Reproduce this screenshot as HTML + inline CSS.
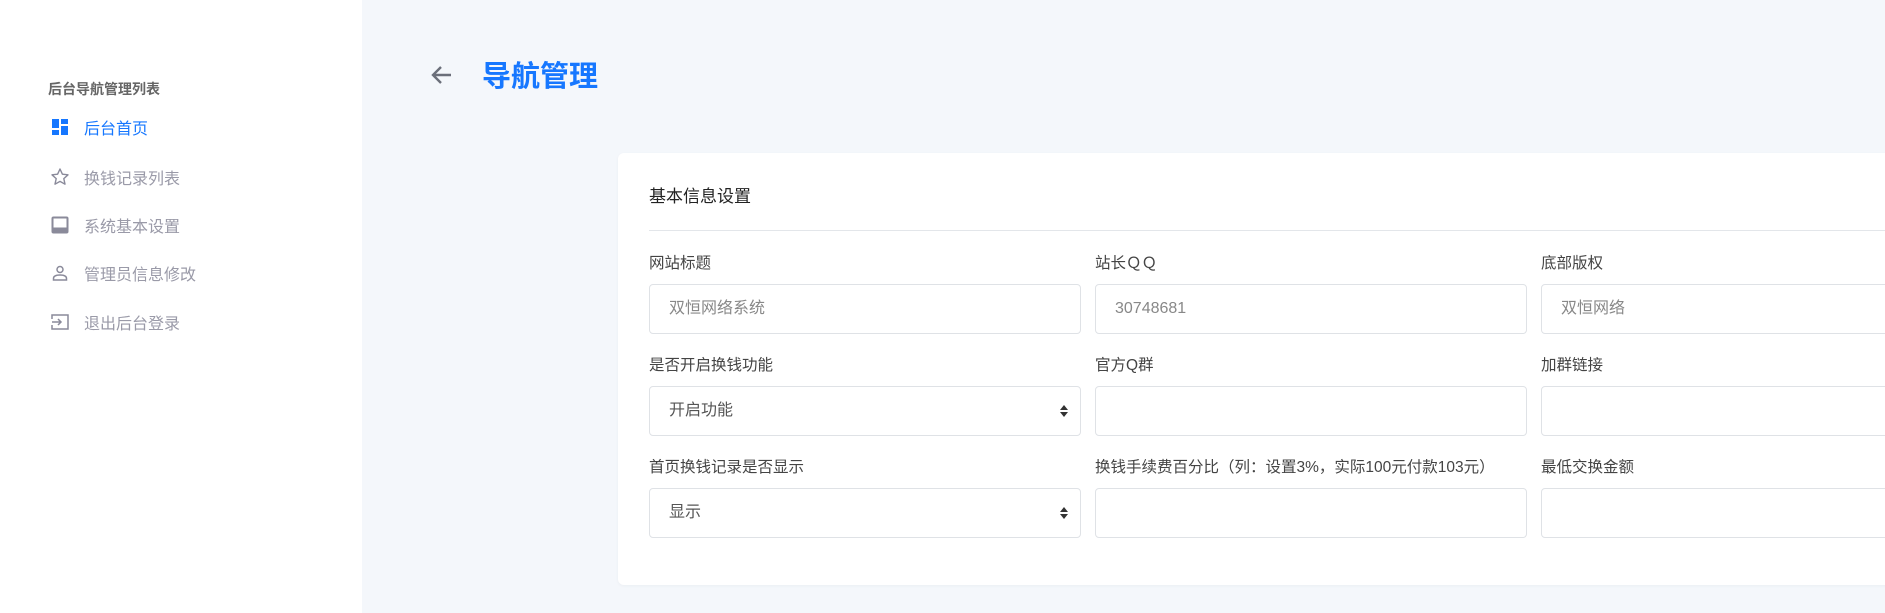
<!DOCTYPE html>
<html><head><meta charset="utf-8"><style>
*{margin:0;padding:0;box-sizing:border-box}
body{width:1885px;height:613px;overflow:hidden;background:#f4f7fb;font-family:"Liberation Sans","Noto Sans CJK SC",sans-serif;position:relative}
.side{position:absolute;left:0;top:0;width:362px;height:613px;background:#fff}
.st{position:absolute;left:48px;top:79px;font-size:14px;font-weight:bold;color:#666}
.mi{position:absolute;left:50px;font-size:16px;color:#9a9aa8;display:flex;align-items:center}
.mi svg{width:20px;height:20px;margin-right:14px}
.mi.a{color:#1677ff}
.back{position:absolute;left:430px;top:62px}
.title{position:absolute;left:482px;top:53px;font-size:29px;font-weight:bold;color:#1677ff}
.card{position:absolute;left:618px;top:153px;width:1400px;height:432px;background:#fff;border-radius:6px;box-shadow:0 1px 3px rgba(0,0,0,.04)}
.ct{position:absolute;left:649px;top:182px;font-size:17px;color:#222}
.hr{position:absolute;left:649px;top:230px;width:1300px;height:1px;background:#e3e6ea}
.lb{position:absolute;font-size:15.5px;color:#444}
.in{position:absolute;width:432px;height:50px;border:1px solid #dfe2e6;border-radius:4px;background:#fff;font-size:16px;color:#888;padding-left:19px;line-height:48px}
.car{position:absolute;right:12px;top:17px;width:8px;height:14px}
</style></head><body>
<div class="side">
<div class="st">后台导航管理列表</div>
<div class="mi a" style="top:115px"><svg viewBox="0 0 20 20"><rect x="2" y="2" width="7" height="9" fill="#1677ff"/><rect x="11" y="2" width="7" height="5" fill="#1677ff"/><rect x="2" y="13" width="7" height="5" fill="#1677ff"/><rect x="11" y="9" width="7" height="9" fill="#1677ff"/></svg>后台首页</div>
<div class="mi" style="top:165px"><svg viewBox="0 0 20 20"><path d="M10 2l2.4 5.2 5.6.6-4.2 3.8 1.2 5.6L10 14.4 5 17.2l1.2-5.6L2 7.8l5.6-.6z" fill="none" stroke="#8a8a9a" stroke-width="1.4" stroke-linejoin="round"/></svg>换钱记录列表</div>
<div class="mi" style="top:213px"><svg viewBox="0 0 20 20"><rect x="1.5" y="1.5" width="17" height="17" rx="2" fill="#8a8a9a"/><rect x="3.5" y="3.5" width="13" height="9" fill="#fff"/></svg>系统基本设置</div>
<div class="mi" style="top:261px"><svg viewBox="0 0 20 20"><circle cx="10" cy="6.5" r="3" fill="none" stroke="#8a8a9a" stroke-width="1.5"/><path d="M3.5 17v-1.5c0-2 2-3.5 6.5-3.5s6.5 1.5 6.5 3.5V17z" fill="none" stroke="#8a8a9a" stroke-width="1.5"/></svg>管理员信息修改</div>
<div class="mi" style="top:310px"><svg viewBox="0 0 20 20"><path d="M2 7V3h16v14H2v-4" fill="none" stroke="#8a8a9a" stroke-width="1.5"/><path d="M2 10h9M8 7l3 3-3 3" fill="none" stroke="#8a8a9a" stroke-width="1.5"/></svg>退出后台登录</div>
</div>
<svg class="back" width="24" height="26" viewBox="0 0 24 26"><path d="M21 13H4M11 5l-8 8 8 8" fill="none" stroke="#6b6f7a" stroke-width="2.4"/></svg>
<div class="title">导航管理</div>
<div class="card"></div>
<div class="ct">基本信息设置</div>
<div class="hr"></div>

<div class="lb" style="left:649px;top:251px">网站标题</div>
<div class="lb" style="left:1095px;top:251px">站长ＱＱ</div>
<div class="lb" style="left:1541px;top:251px">底部版权</div>
<div class="in" style="left:649px;top:284px">双恒网络系统</div>
<div class="in" style="left:1095px;top:284px">30748681</div>
<div class="in" style="left:1541px;top:284px">双恒网络</div>

<div class="lb" style="left:649px;top:353px">是否开启换钱功能</div>
<div class="lb" style="left:1095px;top:353px">官方Q群</div>
<div class="lb" style="left:1541px;top:353px">加群链接</div>
<div class="in" style="left:649px;top:386px;color:#555">开启功能<svg class="car" viewBox="0 0 8 14"><path d="M0 6l4-5 4 5zM0 8l4 5 4-5z" fill="#333"/></svg></div>
<div class="in" style="left:1095px;top:386px"></div>
<div class="in" style="left:1541px;top:386px"></div>

<div class="lb" style="left:649px;top:455px">首页换钱记录是否显示</div>
<div class="lb" style="left:1095px;top:455px">换钱手续费百分比（列：设置3%，实际100元付款103元）</div>
<div class="lb" style="left:1541px;top:455px">最低交换金额</div>
<div class="in" style="left:649px;top:488px;color:#555">显示<svg class="car" viewBox="0 0 8 14"><path d="M0 6l4-5 4 5zM0 8l4 5 4-5z" fill="#333"/></svg></div>
<div class="in" style="left:1095px;top:488px"></div>
<div class="in" style="left:1541px;top:488px"></div>
</body></html>
